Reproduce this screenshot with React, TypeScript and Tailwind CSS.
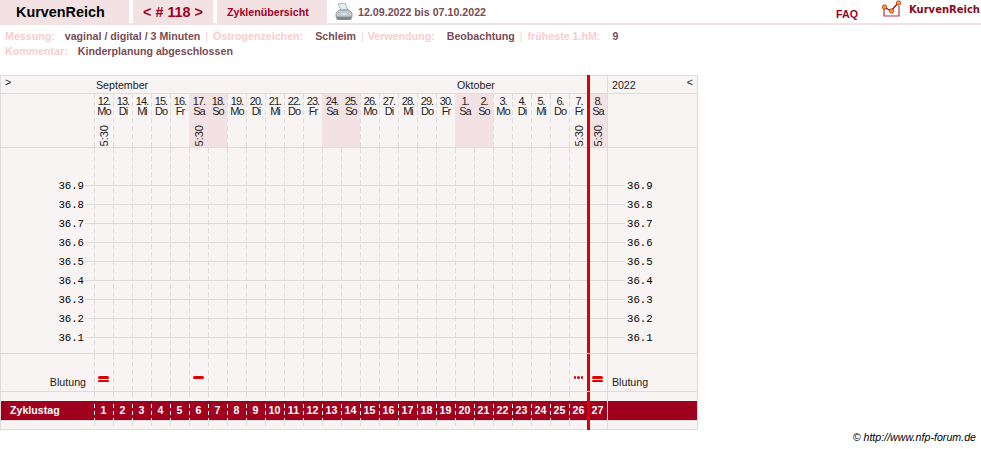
const days = [
  ["12.", "Mo", true], ["13.", "Di"], ["14.", "Mi"], ["15.", "Do"], ["16.", "Fr"], ["17.", "Sa", true], ["18.", "So"],
  ["19.", "Mo"], ["20.", "Di"], ["21.", "Mi"], ["22.", "Do"], ["23.", "Fr"], ["24.", "Sa"], ["25.", "So"],
  ["26.", "Mo"], ["27.", "Di"], ["28.", "Mi"], ["29.", "Do"], ["30.", "Fr"], ["1.", "Sa"], ["2.", "So"],
  ["3.", "Mo"], ["4.", "Di"], ["5.", "Mi"], ["6.", "Do"], ["7.", "Fr", true], ["8.", "Sa", true],
] as [string, string, boolean?][];

const temps = ["36.9", "36.8", "36.7", "36.6", "36.5", "36.4", "36.3", "36.2", "36.1"];

const dash = "bg-[repeating-linear-gradient(to_bottom,#dddddd_0,#dddddd_5px,transparent_5px,transparent_8px)] bg-[length:1px_100%] bg-no-repeat";
const whiteDash = "bg-[repeating-linear-gradient(to_bottom,transparent_0,transparent_3px,#ffffff_3px,#ffffff_7px)] bg-[length:1px_100%] bg-no-repeat";

// one row of 27 day cells with the dashed separators
const DayCols = ({ children }: { children?: (i: number) => React.ReactNode }) => (
  <div className="flex h-full">
    {days.map((d, i) => (
      <div key={i} className={`w-[19px] h-full shrink-0 ${i === 26 ? "" : dash}`}>
        {children && children(i)}
      </div>
    ))}
  </div>
);

const App = () => {
  return (
    <div className="relative w-[981px] h-[449px] bg-white overflow-hidden font-['Liberation_Sans',Arial,sans-serif] text-[10.67px]">

      {/* Header */}
      <div className="flex h-[25px] border-b-2 border-[#f3e2e4]">
        <div className="w-[129px] h-[23px] bg-[#f3e2e4] pl-[16px] text-[14.4px] leading-[25px] font-bold text-black">KurvenReich</div>
        <div className="w-[80px] h-[23px] ml-[4px] bg-[#f3e2e4] text-center text-[14.4px] leading-[25px] font-bold text-[#a0001e]">&lt; # 118 &gt;</div>
        <div className="w-[110px] h-[23px] ml-[4px] bg-[#f3e2e4] pl-[10px] leading-[24px] font-bold text-[#a0001e]">Zyklenübersicht</div>
        <svg className="ml-[8px] mt-[3px]" width="18" height="18" viewBox="0 0 18 18">
          <path d="M3 1l7-1 3 7H6z" fill="#e4eef4" stroke="#8fa6b4" strokeWidth="0.8" />
          <path d="M1 10l3-3h10l3 3v4H1z" fill="#c2c8cd" stroke="#868e95" strokeWidth="0.8" />
          <path d="M1 14h16l-1 3H2z" fill="#7f868d" />
          <path d="M6 11h6" stroke="#f4f6f7" strokeWidth="1" />
        </svg>
        <div className="ml-[5px] leading-[24px] font-bold text-[#7a4b55]">12.09.2022 bis 07.10.2022</div>
        <div className="ml-auto mt-[8px] leading-[13px] font-bold text-[#a0001e]">FAQ</div>
        <svg className="ml-[24px]" width="20" height="19" viewBox="0 0 20 19">
          <path d="M2 8v8h15V6" fill="none" stroke="#c0304e" strokeWidth="1.2" />
          <path d="M2 7l7 4 7-8" fill="none" stroke="#a0001e" strokeWidth="1.2" />
          <circle cx="2.5" cy="7" r="2.2" fill="#f5a623" stroke="#a0001e" strokeWidth="0.6" />
          <circle cx="9.5" cy="11" r="2.2" fill="#f5a623" stroke="#a0001e" strokeWidth="0.6" />
          <circle cx="16.5" cy="3" r="2.2" fill="#f5a623" stroke="#a0001e" strokeWidth="0.6" />
        </svg>
        <div className="ml-[7px] mr-[1px] mt-[3px] text-[10px] leading-[14px] font-bold font-['DejaVu_Sans',sans-serif] text-[#8a0a20]">KurvenReich</div>
      </div>

      {/* Info lines */}
      <div className="pl-[5px] pt-[4px] leading-[15px] font-bold text-[#f7cdd0]">
        <div className="flex whitespace-pre">
          <span>Messung:</span>
          <span className="ml-[10px] text-[#7a4b55]">vaginal / digital / 3 Minuten</span>
          <span className="ml-[5px] font-normal">|</span>
          <span className="ml-[5px]">Östrogenzeichen:</span>
          <span className="ml-[12px] text-[#7a4b55]">Schleim</span>
          <span className="ml-[5px] font-normal">|</span>
          <span className="ml-[4px]">Verwendung:</span>
          <span className="ml-[12px] text-[#7a4b55]">Beobachtung</span>
          <span className="ml-[5px] font-normal">|</span>
          <span className="ml-[5px]">früheste 1.hM:</span>
          <span className="ml-[12px] text-[#7a4b55]">9</span>
        </div>
        <div className="flex">
          <span>Kommentar:</span>
          <span className="ml-[10px] text-[#7a4b55]">Kinderplanung abgeschlossen</span>
        </div>
      </div>

      {/* Chart table */}
      <div className="relative mt-[16px] w-[698px] h-[355px] bg-[#f9f4f4] border border-[#dddddd] flex flex-col text-[#222222]">

        {/* month row */}
        <div className="flex h-[18px] shrink-0 border-b border-[#dddddd] leading-[18px]">
          <div className="w-[93px] pl-[4px] leading-[13px]">&gt;</div>
          <div className="w-[361px] pl-[2px]">September</div>
          <div className="w-[152px] pl-[2px]">Oktober</div>
          <div className="flex-1 flex justify-between border-l border-[#dddddd] pl-[4px] pr-[4px]">
            <span>2022</span>
            <span className="leading-[13px]">&lt;</span>
          </div>
        </div>

        {/* day header */}
        <div className="flex h-[54px] shrink-0 border-b border-[#dddddd]">
          <div className="w-[93px] shrink-0" />
          <div className="flex">
            {days.map(([d, w, t], i) => {
              const weekend = w === "Sa" || w === "So";
              return (
                <div key={i} className={`w-[19px] h-full shrink-0 flex flex-col items-center pl-[1px] ${weekend ? "bg-[#f3e2e4]" : dash}`}>
                  <div className="text-[11px] leading-[10px] mt-[2px] tracking-[-1px] text-center">{d}<br />{w}</div>
                  {t && <div className="mt-auto mb-[1px] text-[11px] leading-[11px] [writing-mode:vertical-rl] rotate-180">5:30</div>}
                </div>
              );
            })}
          </div>
          <div className="flex-1 border-l border-[#dddddd]" />
        </div>

        {/* temperatures */}
        <div className="relative flex h-[206px] shrink-0 border-b border-[#dddddd]">
          <div className="w-[93px] shrink-0" />
          <DayCols />
          <div className="flex-1 border-l border-[#dddddd]" />
          <div className="absolute inset-x-0 top-[28px] flex flex-col">
            {temps.map((t) => (
              <div key={t} className="flex items-center h-[19px] font-['Liberation_Mono',monospace] text-[10.67px] text-black">
                <div className="w-[83px] text-right">{t}</div>
                <div className="h-px w-[540px] ml-[1px] bg-[#dddddd]" />
                <div className="ml-[2px]">{t}</div>
              </div>
            ))}
          </div>
        </div>

        {/* Blutung */}
        <div className="flex h-[38px] shrink-0 border-b border-[#dddddd]">
          <div className="w-[85px] shrink-0 text-right pt-[21px] leading-[15px]">Blutung</div>
          <div className="w-[8px] shrink-0" />
          <DayCols>
            {(i) => (
              <div className="flex flex-col items-center pt-[22px] gap-[1px]">
                {(i === 0 || i === 26) && <><div className="w-[11px] h-[2.5px] rounded-full bg-[#dd0000]" /><div className="w-[11px] h-[2.5px] rounded-full bg-[#dd0000]" /></>}
                {i === 5 && <div className="w-[11px] h-[3px] rounded-full bg-[#dd0000]" />}
                {i === 25 && <div className="flex gap-px"><div className="size-[2.5px] rounded-full bg-[#dd0000]" /><div className="size-[2.5px] rounded-full bg-[#dd0000]" /><div className="size-[2.5px] rounded-full bg-[#dd0000]" /></div>}
              </div>
            )}
          </DayCols>
          <div className="flex-1 border-l border-[#dddddd] pl-[4px] pt-[21px] leading-[15px]">Blutung</div>
        </div>

        {/* spacer */}
        <div className="flex h-[9px] shrink-0">
          <div className="w-[93px] shrink-0" />
          <DayCols />
          <div className="flex-1 border-l border-[#dddddd]" />
        </div>

        {/* Zyklustag */}
        <div className="flex h-[20px] shrink-0 bg-[#a0001e] border-b border-[#dddddd] text-white font-bold leading-[19px]">
          <div className="w-[93px] shrink-0 pl-[9px]">Zyklustag</div>
          <div className="flex">
            {days.map((_, i) => (
              <div key={i} className={`w-[19px] shrink-0 text-center ${i === 26 ? "" : whiteDash}`}>{i + 1}</div>
            ))}
          </div>
          <div className="flex-1 border-l border-[#dddddd]" />
        </div>

        {/* bottom strip */}
        <div className="flex flex-1">
          <div className="w-[93px] shrink-0" />
          <DayCols />
          <div className="flex-1 border-l border-[#dddddd]" />
        </div>

        {/* today marker, broken at the two row lines */}
        <div className="absolute top-[-1px] h-[278px] left-[586px] w-[3px] bg-[#dd0000]" />
        <div className="absolute top-[278px] h-[37px] left-[586px] w-[3px] bg-[#dd0000]" />
        <div className="absolute top-[316px] bottom-[-1px] left-[586px] w-[3px] bg-[#dd0000]" />
      </div>

      <div className="absolute right-[5px] top-[431px] leading-[13px] italic text-black">© http://www.nfp-forum.de</div>
    </div>
  );
};

export default App;
